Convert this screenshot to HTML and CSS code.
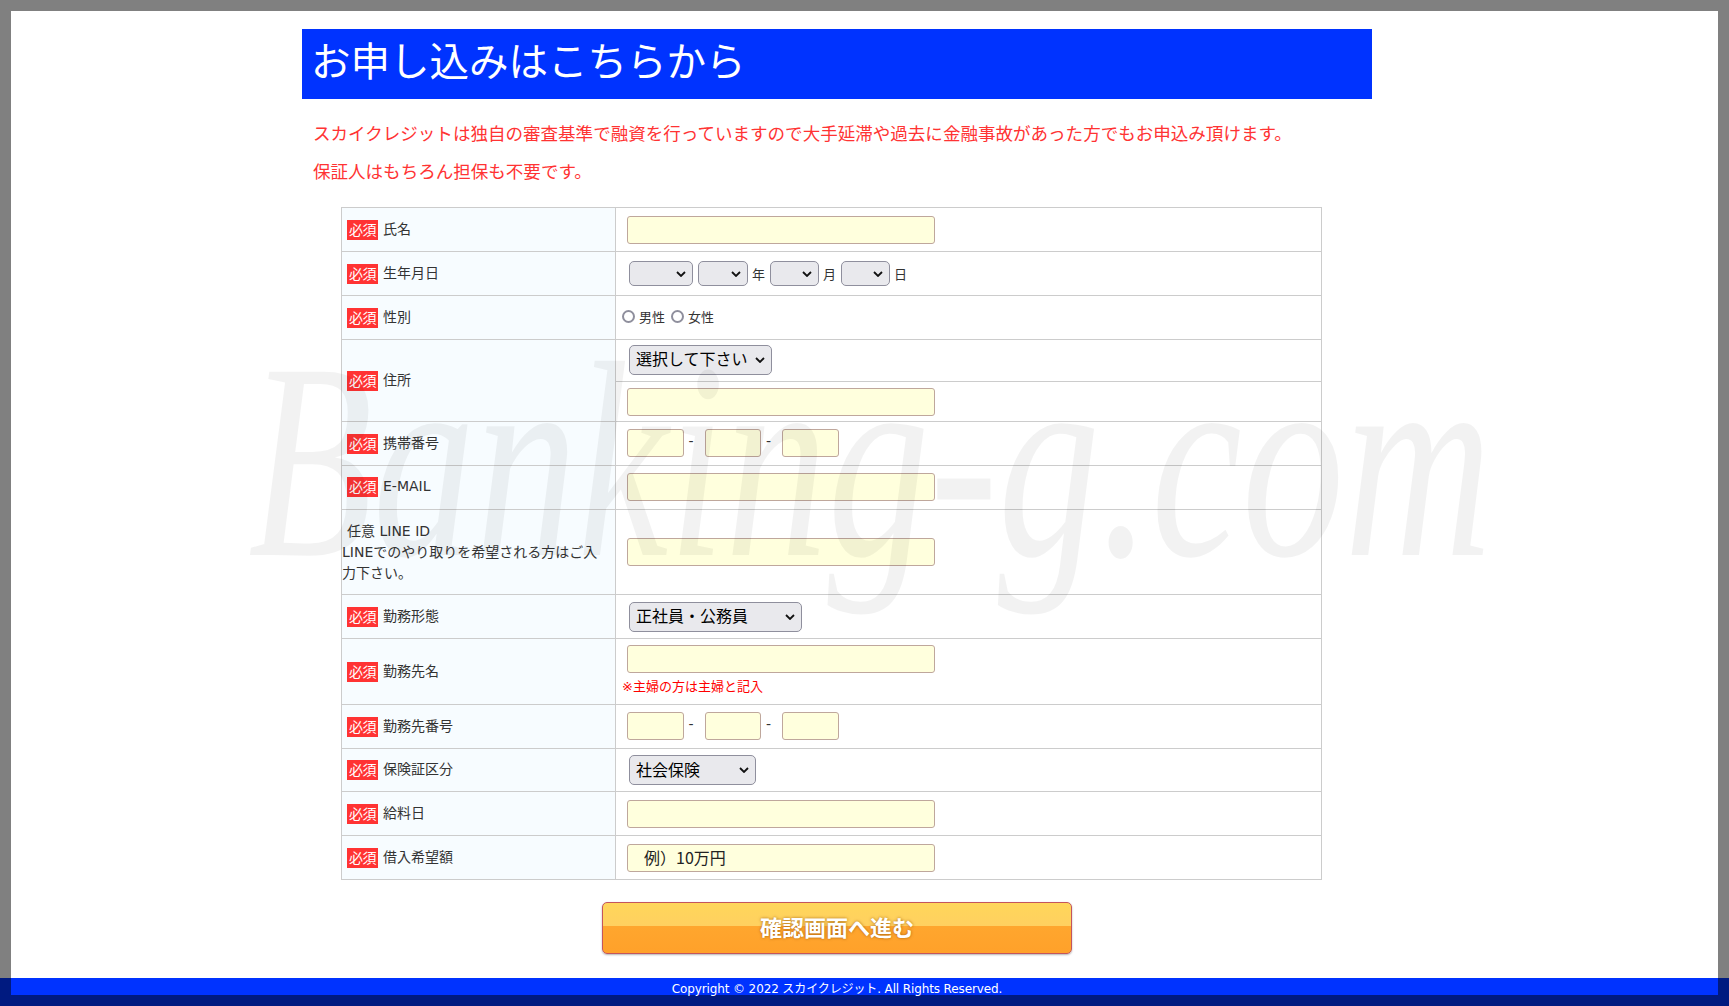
FILE: index.html
```html
<!DOCTYPE html>
<html lang="ja">
<head>
<meta charset="utf-8">
<title>お申し込みはこちらから</title>
<link rel="stylesheet" href="styles.css">
</head>
<body>
<div class="frame">
  <main class="content">
    <h1 class="title">お申し込みはこちらから</h1>
    <div class="intro">
      <p>スカイクレジットは独自の審査基準で融資を行っていますので大手延滞や過去に金融事故があった方でもお申込み頂けます。</p>
      <p>保証人はもちろん担保も不要です。</p>
    </div>
    <form class="apply">
      <table class="form-table">
        <tr class="r44">
          <th><span class="badge">必須</span>氏名</th>
          <td><input class="wide" type="text"></td>
        </tr>
        <tr class="r44">
          <th><span class="badge">必須</span>生年月日</th>
          <td>
            <div class="inline dob">
              <select class="s-y"><option></option></select>
              <select class="s-m"><option></option></select><span class="unit">年</span>
              <select class="s-m2"><option></option></select><span class="unit">月</span>
              <select class="s-m2"><option></option></select><span class="unit">日</span>
            </div>
          </td>
        </tr>
        <tr class="r44">
          <th><span class="badge">必須</span>性別</th>
          <td class="radio-cell">
            <div class="inline radios">
              <label class="radio"><input type="radio" name="sex">男性</label>
              <label class="radio"><input type="radio" name="sex">女性</label>
            </div>
          </td>
        </tr>
        <tr class="r42">
          <th rowspan="2"><span class="badge">必須</span>住所</th>
          <td><select class="big s-pref nudge"><option>選択して下さい</option></select></td>
        </tr>
        <tr class="r40">
          <td><input class="wide" type="text"></td>
        </tr>
        <tr class="r44">
          <th><span class="badge">必須</span>携帯番号</th>
          <td>
            <div class="inline tel nudge">
              <input class="short" type="text"><span class="dash">-</span>
              <input class="short" type="text"><span class="dash">-</span>
              <input class="short" type="text">
            </div>
          </td>
        </tr>
        <tr class="r44">
          <th><span class="badge">必須</span>E-MAIL</th>
          <td><input class="wide nudge" type="text"></td>
        </tr>
        <tr class="r85">
          <th class="free"><span class="free-head">任意 LINE ID</span><br>LINEでのやり取りを希望される方はご入力下さい。</th>
          <td><input class="wide" type="text"></td>
        </tr>
        <tr class="r44">
          <th><span class="badge">必須</span>勤務形態</th>
          <td><select class="big s-job"><option>正社員・公務員</option></select></td>
        </tr>
        <tr class="r66">
          <th><span class="badge">必須</span>勤務先名</th>
          <td class="stack">
            <input class="wide" type="text">
            <p class="note">※主婦の方は主婦と記入</p>
          </td>
        </tr>
        <tr class="r44">
          <th><span class="badge">必須</span>勤務先番号</th>
          <td>
            <div class="inline tel nudge">
              <input class="short" type="text"><span class="dash">-</span>
              <input class="short" type="text"><span class="dash">-</span>
              <input class="short" type="text">
            </div>
          </td>
        </tr>
        <tr class="r43">
          <th><span class="badge">必須</span>保険証区分</th>
          <td><select class="big s-ins"><option>社会保険</option></select></td>
        </tr>
        <tr class="r44">
          <th><span class="badge">必須</span>給料日</th>
          <td><input class="wide" type="text"></td>
        </tr>
        <tr class="r44">
          <th><span class="badge">必須</span>借入希望額</th>
          <td><input class="wide" type="text" value="　例）10万円"></td>
        </tr>
      </table>
      <button class="submit" type="button">確認画面へ進む</button>
    </form>
  </main>
  <svg class="watermark" width="1300" height="460" viewBox="0 0 1300 460" aria-hidden="true">
    <text x="8" y="250" textLength="1244" lengthAdjust="spacingAndGlyphs">Banking-g.com</text>
  </svg>
</div>
<footer class="footer">
  <div class="footer-bar">
    <p class="copy">Copyright © 2022 スカイクレジット. All Rights Reserved.</p>
  </div>
</footer>
</body>
</html>
```
FILE: styles.css
```css
* { box-sizing: border-box; }
html, body { margin: 0; height: 100%; }
body {
  background: #808080;
  display: flex;
  flex-direction: column;
  height: 100vh;
  overflow: hidden;
  padding-top: 11px;
  font-family: "DejaVu Sans", "Noto Sans CJK JP", sans-serif;
  color: #333;
}
.frame {
  position: relative;
  flex: 1;
  min-height: 0;
  margin: 0 11px;
  background: #fff;
  overflow: hidden;
}
.content {
  width: 1070px;
  margin-left: 291px;
  padding-top: 18px;
}
.title {
  margin: 0;
  height: 70px;
  padding: 3px 0 0 9px;
  background: #0033ff;
  color: #fff;
  font-size: 39.5px;
  font-weight: 400;
  line-height: 61px;
}
.intro {
  margin: 16px 0 16px;
  padding-left: 11px;
  color: #ff3333;
  font-size: 17.55px;
  font-weight: 400;
  line-height: 38px;
}
.intro p { margin: 0; white-space: nowrap; }
.form-table {
  border-collapse: collapse;
  table-layout: fixed;
  width: 981px;
  margin-left: 39px;
  font-size: 14px;
}
.form-table th, .form-table td {
  border: 1px solid #ccc;
  padding: 0;
  vertical-align: middle;
}
.form-table th {
  width: 274px;
  background: #f7fcff;
  font-weight: 400;
  text-align: left;
  padding: 0 0 2px 5px;
  color: #333;
}
.form-table td { padding-left: 11px; }
.r44 { height: 44px; }
.r43 { height: 43px; }
.r42 { height: 42px; }
.r40 { height: 40px; }
.r85 { height: 85px; }
.r66 { height: 66px; }
.badge {
  display: inline-block;
  width: 31px;
  height: 20px;
  margin-right: 5px;
  background: #ff3333;
  color: #fff;
  font-size: 14px;
  line-height: 20px;
  text-align: center;
  vertical-align: middle;
  letter-spacing: -0.5px;
}
.form-table .free {
  padding: 0 10px 0 0;
  line-height: 21px;
}
.free-head { padding-left: 5px; }
input[type="text"] {
  display: block;
  height: 28px;
  padding: 0 0 2px;
  border: 1px solid #bfa79c;
  border-radius: 3px;
  background: #ffffdd;
  font: 400 16px "Noto Sans CJK JP", sans-serif;
  color: #222;
}
input.wide { width: 308px; }
input.short { width: 56.5px; }
.inline { display: flex; align-items: center; }
.nudge { margin-bottom: 2px; }
select {
  appearance: none;
  display: block;
  height: 25px;
  margin-left: 2px;
  padding: 0 16px 0 6px;
  border: 1px solid #8f8f9d;
  border-radius: 5px;
  background-color: #e9e9ed;
  background-image: url("data:image/svg+xml,%3Csvg xmlns='http://www.w3.org/2000/svg' width='10' height='6'%3E%3Cpath d='M1 1l4 4 4-4' fill='none' stroke='%23111' stroke-width='1.8'/%3E%3C/svg%3E");
  background-position: right 6px center;
  background-repeat: no-repeat;
  color: #000;
}
.big {
  height: 30px;
  padding-bottom: 3px;
  font: 400 16px "Noto Sans CJK JP", sans-serif;
}
.s-y { width: 64px; }
.s-m { width: 50px; margin-left: 5px; }
.s-m2 { width: 49px; margin-left: 0; }
.unit { width: 22px; padding-left: 4px; font-size: 13px; }
.s-pref { width: 143px; }
.s-job { width: 173px; }
.s-ins { width: 127px; }
.dash {
  width: 21px;
  padding: 0 0 4px 5px;
  line-height: 1;
}
.form-table .radio-cell { padding-left: 6px; }
.radios { margin-bottom: 2px; }
.radio {
  display: flex;
  align-items: center;
  margin-right: 6px;
  font-size: 13px;
}
.radio input {
  appearance: none;
  width: 13px;
  height: 13px;
  margin: 0 4px 0 0;
  border: 2px solid #8f8f9d;
  border-radius: 50%;
  background: #fff;
}
.form-table .stack { vertical-align: top; }
.stack input { margin-top: 6px; }
.note {
  margin: 5px 0 0 -5px;
  color: #ff0000;
  font-size: 13px;
  line-height: 18px;
}
.submit {
  display: block;
  width: 470px;
  height: 52px;
  margin: 22px auto 0;
  padding: 0 0 5px;
  border: 1px solid #c4555c;
  border-radius: 5px;
  background: linear-gradient(#ffd65a 0%, #ffd060 47%, #ffa62e 47%, #ffa12a 100%);
  box-shadow: 0 1px 2px rgba(0, 0, 0, 0.3);
  color: #fff;
  font: 700 22px/1 "Noto Sans CJK JP", sans-serif;
  text-shadow: 0 0 3px rgba(150, 80, 0, 0.8);
}
.watermark {
  position: absolute;
  left: 229px;
  top: 294px;
  pointer-events: none;
}
.watermark text {
  font-family: "Liberation Serif", serif;
  font-style: italic;
  font-size: 280px;
  fill: rgba(0, 0, 0, 0.05);
}
.footer {
  flex: none;
  height: 28px;
  background: #001a80;
  padding: 0 11px 11px;
}
.footer-bar {
  height: 17px;
  padding-left: 291px;
  background: #0033ff;
}
.copy {
  width: 1070px;
  margin: 0;
  color: #fff;
  font-family: "DejaVu Sans", "Noto Sans CJK JP", sans-serif;
  font-size: 12px;
  letter-spacing: -0.12px;
  line-height: 22px;
  text-align: center;
  white-space: nowrap;
}
```
